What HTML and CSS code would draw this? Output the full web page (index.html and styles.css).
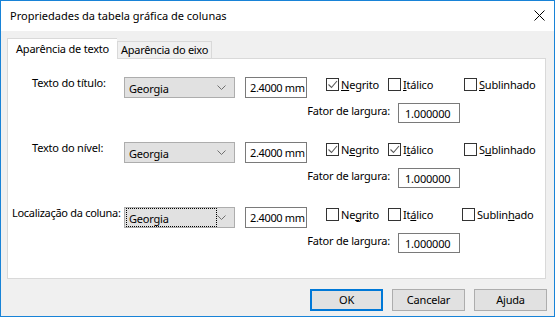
FILE: index.html
```html
<!DOCTYPE html>
<html lang="pt">
<head>
    <meta charset="UTF-8">
    <title>Propriedades da tabela gráfica de colunas</title>
    <link rel="stylesheet" href="styles.css">
</head>
<body>
    <div class="window">
        <div class="titlebar">
            <span class="title">Propriedades da tabela gráfica de colunas</span>
            <svg class="close" width="11" height="11" viewBox="0 0 11 11">
                <path d="M0.5 0.5 L10.5 10.5 M10.5 0.5 L0.5 10.5" stroke="#000" stroke-width="1" fill="none"/>
            </svg>
        </div>

        <div class="content">
            <div class="tabs">
                <div class="tab active">Aparência de texto</div>
                <div class="tab">Aparência do eixo</div>
            </div>

            <div class="panel">
                <!-- titulo -->
                <div class="group">
                    <div class="row">
                        <span class="label">Texto do título:</span>
                        <div class="select">
                            <span class="select-text">Georgia</span>
                            <svg class="chevron" width="9" height="5" viewBox="0 0 9 5"><path d="M0.5 0.5 L4.5 4.5 L8.5 0.5" stroke="#707070" fill="none"/></svg>
                        </div>
                        <div class="input size">2.4000 mm</div>
                        <div class="check c1">
                            <span class="box"><svg width="11" height="11" viewBox="0 0 11 11"><path d="M1.5 5.5 L4.5 8.5 L10 2" stroke="#5a5a5a" stroke-width="1.1" fill="none"/></svg></span>
                            <span><u>N</u>egrito</span>
                        </div>
                        <div class="check c2">
                            <span class="box"></span>
                            <span><u>I</u>tálico</span>
                        </div>
                        <div class="check c3">
                            <span class="box"></span>
                            <span><u>S</u>ublinhado</span>
                        </div>
                    </div>
                    <div class="row factor">
                        <span class="factor-label">Fator de largura:</span>
                        <div class="input factor-input">1.000000</div>
                    </div>
                </div>

                <!-- nivel -->
                <div class="group">
                    <div class="row">
                        <span class="label">Texto do nível:</span>
                        <div class="select">
                            <span class="select-text">Georgia</span>
                            <svg class="chevron" width="9" height="5" viewBox="0 0 9 5"><path d="M0.5 0.5 L4.5 4.5 L8.5 0.5" stroke="#707070" fill="none"/></svg>
                        </div>
                        <div class="input size">2.4000 mm</div>
                        <div class="check c1">
                            <span class="box"><svg width="11" height="11" viewBox="0 0 11 11"><path d="M1.5 5.5 L4.5 8.5 L10 2" stroke="#5a5a5a" stroke-width="1.1" fill="none"/></svg></span>
                            <span>N<u>e</u>grito</span>
                        </div>
                        <div class="check c2">
                            <span class="box"><svg width="11" height="11" viewBox="0 0 11 11"><path d="M1.5 5.5 L4.5 8.5 L10 2" stroke="#5a5a5a" stroke-width="1.1" fill="none"/></svg></span>
                            <span>I<u>t</u>álico</span>
                        </div>
                        <div class="check c3">
                            <span class="box"></span>
                            <span>S<u>u</u>blinhado</span>
                        </div>
                    </div>
                    <div class="row factor">
                        <span class="factor-label">Fator de largura:</span>
                        <div class="input factor-input">1.000000</div>
                    </div>
                </div>

                <!-- coluna -->
                <div class="group">
                    <div class="row">
                        <span class="label wide">Localização da coluna:</span>
                        <div class="select">
                            <span class="select-text focused">Georgia</span>
                            <svg class="chevron" width="9" height="5" viewBox="0 0 9 5"><path d="M0.5 0.5 L4.5 4.5 L8.5 0.5" stroke="#707070" fill="none"/></svg>
                        </div>
                        <div class="input size">2.4000 mm</div>
                        <div class="check c1">
                            <span class="box"></span>
                            <span>Ne<u>g</u>rito</span>
                        </div>
                        <div class="check c2">
                            <span class="box"></span>
                            <span>It<u>á</u>lico</span>
                        </div>
                        <div class="check c3 shifted">
                            <span class="box"></span>
                            <span>Sublin<u>h</u>ado</span>
                        </div>
                    </div>
                    <div class="row factor">
                        <span class="factor-label">Fator de largura:</span>
                        <div class="input factor-input">1.000000</div>
                    </div>
                </div>
            </div>

            <div class="buttons">
                <div class="button default">OK</div>
                <div class="button">Cancelar</div>
                <div class="button">Ajuda</div>
            </div>
        </div>
    </div>
</body>
</html>
```

FILE: styles.css
```css
body{
    margin: 0;
    font-family: "Noto Sans", "Liberation Sans", sans-serif;
    font-size: 11px;
    letter-spacing: -0.2px;
    color: #000;
}

.window{
    width: 555px;
    height: 317px;
    box-sizing: border-box;
    border: 1px solid #1883d7;
    background-color: #f0f0f0;
    display: flex;
    flex-direction: column;
    white-space: nowrap;
}

.titlebar{
    height: 30px;
    background-color: #fff;
    display: flex;
    align-items: center;
    justify-content: space-between;
    padding: 0 9px 0 9px;
}

.title{
    font-size: 11px;
    letter-spacing: 0;
    margin-top: -1px;
}

.close{
    display: block;
    margin-top: -1px;
}

.content{
    padding: 7px 7px 0 6px;
}

.tabs{
    display: flex;
    align-items: flex-start;
    height: 20px;
}

.tab{
    box-sizing: border-box;
    height: 17px;
    margin-top: 3px;
    padding: 0 3px;
    border: 1px solid #d9d9d9;
    border-bottom: none;
    background-color: #f0f0f0;
    line-height: 16px;
    letter-spacing: -0.3px;
}

.tab.active{
    height: 21px;
    margin-top: 0;
    padding: 0 8px;
    background-color: #fff;
    border-right: none;
    line-height: 19px;
    letter-spacing: -0.2px;
    position: relative;
    z-index: 1;
}

.panel{
    box-sizing: border-box;
    width: 539px;
    height: 221px;
    background-color: #fff;
    border: 1px solid #d9d9d9;
    padding: 17px 0 0 0;
}

.group{
    margin-bottom: 18px;
}

.row{
    display: flex;
    align-items: center;
    height: 22px;
}

.label{
    box-sizing: border-box;
    width: 116px;
    padding-left: 24px;
    align-self: flex-start;
    line-height: 13px;
}

.label.wide{
    padding-left: 4px;
    letter-spacing: -0.3px;
}

.select{
    box-sizing: border-box;
    width: 111px;
    height: 21px;
    background-color: #e1e1e1;
    border: 1px solid #adadad;
    display: flex;
    align-items: center;
    justify-content: space-between;
    padding: 0 8px 0 1px;
}

.select-text{
    display: block;
    width: 87px;
    height: 15px;
    line-height: 15px;
    padding: 2px 0 0 2px;
    border: 1px dotted transparent;
}

.select-text.focused{
    border-color: #000;
}

.chevron{
    display: block;
}

.input{
    box-sizing: border-box;
    background-color: #fff;
    border: 1px solid #7a7a7a;
    height: 21px;
    line-height: 19px;
}

.size{
    width: 62px;
    margin-left: 10px;
    padding-left: 4px;
    letter-spacing: -0.35px;
}

.check{
    display: flex;
    align-items: center;
    gap: 2px;
    margin-top: -6px;
}

.box{
    box-sizing: border-box;
    width: 13px;
    height: 13px;
    border: 1px solid #333;
    background-color: #fff;
    display: block;
}

.box svg{
    display: block;
}

.c1{
    margin-left: 19px;
    width: 62px;
}

.c2{
    width: 76px;
}

.c3.shifted{
    margin-left: -2px;
}

.factor{
    margin-top: 5px;
    height: 20px;
}

.factor-label{
    width: 382px;
    text-align: right;
    padding-right: 8px;
    margin-top: -6px;
}

.factor-input{
    width: 62px;
    height: 20px;
    padding-left: 6px;
}

.buttons{
    display: flex;
    justify-content: flex-end;
    gap: 9px;
    margin-top: 10px;
}

.button{
    box-sizing: border-box;
    width: 73px;
    height: 22px;
    background-color: #e1e1e1;
    border: 1px solid #adadad;
    text-align: center;
    line-height: 20px;
}

.button.default{
    border: 2px solid #0078d7;
    line-height: 18px;
}
```
